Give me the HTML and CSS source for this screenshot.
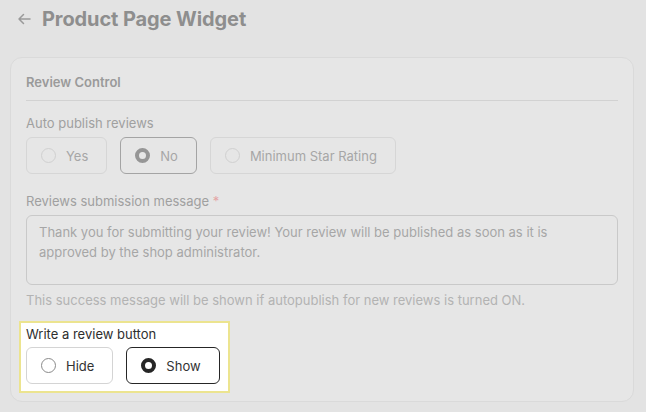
FILE: index.html
```html
<!DOCTYPE html>
<html>
<head>
<meta charset="utf-8">
<link rel="stylesheet" href="styles.css">
</head>
<body>
<header class="page-header">
  <span class="back">
    <svg width="14" height="12" viewBox="0 0 14 12"><path d="M13 6H2M6.5 1.5L2 6l4.5 4.5" fill="none" stroke="#9a9a9a" stroke-width="1.5" stroke-linecap="round" stroke-linejoin="round"/></svg>
  </span>
  <h1 class="title">Product Page Widget</h1>
</header>
<section class="card">
  <div class="card-head">Review Control</div>
  <div class="field">
    <div class="label">Auto publish reviews</div>
    <div class="options">
      <div class="option dim"><span class="dot"></span>Yes</div>
      <div class="option dim selected"><span class="dot"></span>No</div>
      <div class="option dim"><span class="dot"></span>Minimum Star Rating</div>
    </div>
  </div>
  <div class="field msg">
    <div class="label">Reviews submission message <span class="req">*</span></div>
    <div class="textarea">Thank you for submitting your review! Your review will be published as soon as it is approved by the shop administrator.</div>
    <div class="help">This success message will be shown if autopublish for new reviews is turned ON.</div>
  </div>
  <div class="highlight">
    <div class="label strong">Write a review button</div>
    <div class="options">
      <div class="option live"><span class="dot"></span>Hide</div>
      <div class="option live selected"><span class="dot"></span>Show</div>
    </div>
  </div>
</section>
</body>
</html>
```
FILE: styles.css
```css
* { box-sizing: border-box; }
html, body { margin: 0; padding: 0; }
body {
  background: #e3e3e3;
  font-family: Inter, "Noto Sans", sans-serif;
  width: 646px;
  height: 412px;
  overflow: hidden;
}
.page-header {
  display: flex;
  align-items: center;
  height: 37px;
  padding-left: 17px;
}
.back { display: flex; width: 14px; margin-right: 11px; }
.title {
  margin: 0;
  font-size: 20px;
  font-weight: 700;
  color: #8e8e8e;
  letter-spacing: -0.1px;
}
.card {
  margin: 20px 12px 0 10px;
  background: #e6e6e6;
  border: 1px solid #dadada;
  border-radius: 12px;
  padding: 15px 15px 8px 15px;
}
.card-head {
  font-size: 13px;
  font-weight: 600;
  color: #9a9a9a;
  line-height: 18px;
  padding-bottom: 9px;
  border-bottom: 1px solid #d2d2d2;
  margin-bottom: 13px;
}
.label {
  font-size: 13px;
  line-height: 18px;
  color: #a0a0a0;
  margin-bottom: 5px;
}
.req { color: #e4a5a5; }
.options { display: flex; gap: 13px; }
.option {
  display: flex;
  align-items: center;
  height: 37px;
  padding: 0 18px 0 14px;
  border-radius: 6px;
  font-size: 13px;
}
.dot {
  width: 15px;
  height: 15px;
  border-radius: 50%;
  margin-right: 10px;
  flex: none;
}
.option.dim { border: 1px solid #d6d6d6; color: #a6a6a6; }
.option.dim .dot { border: 1px solid #d0d0d0; }
.option.dim.selected { border-color: #a4a4a4; }
.option.dim.selected .dot { border: 4px solid #969696; background: #e6e6e6; }
.field.msg { margin-top: 18px; }
.textarea {
  height: 70px;
  border: 1px solid #c9c9c9;
  border-radius: 6px;
  padding: 6px 12px;
  font-size: 13px;
  line-height: 20px;
  color: #a6a6a6;
}
.help {
  margin-top: 6px;
  font-size: 13px;
  line-height: 18px;
  color: #b3b3b3;
}
.highlight {
  display: inline-block;
  margin: 12px 0 0 -7px;
  padding: 2px 8px 7px 5px;
  border: 2px solid #ece48f;
  background: #ffffff;
}
.label.strong { color: #2e2e2e; margin-bottom: 4px; }
.option.live { color: #333; background: #fff; }
.option.live:not(.selected) { border: 1px solid #d4d4d4; }
.option.live .dot { border: 1px solid #8a8a8a; }
.option.live.selected { border: 1.5px solid #262626; }
.option.live.selected .dot { border: 4px solid #262626; background: #fff; }
```
